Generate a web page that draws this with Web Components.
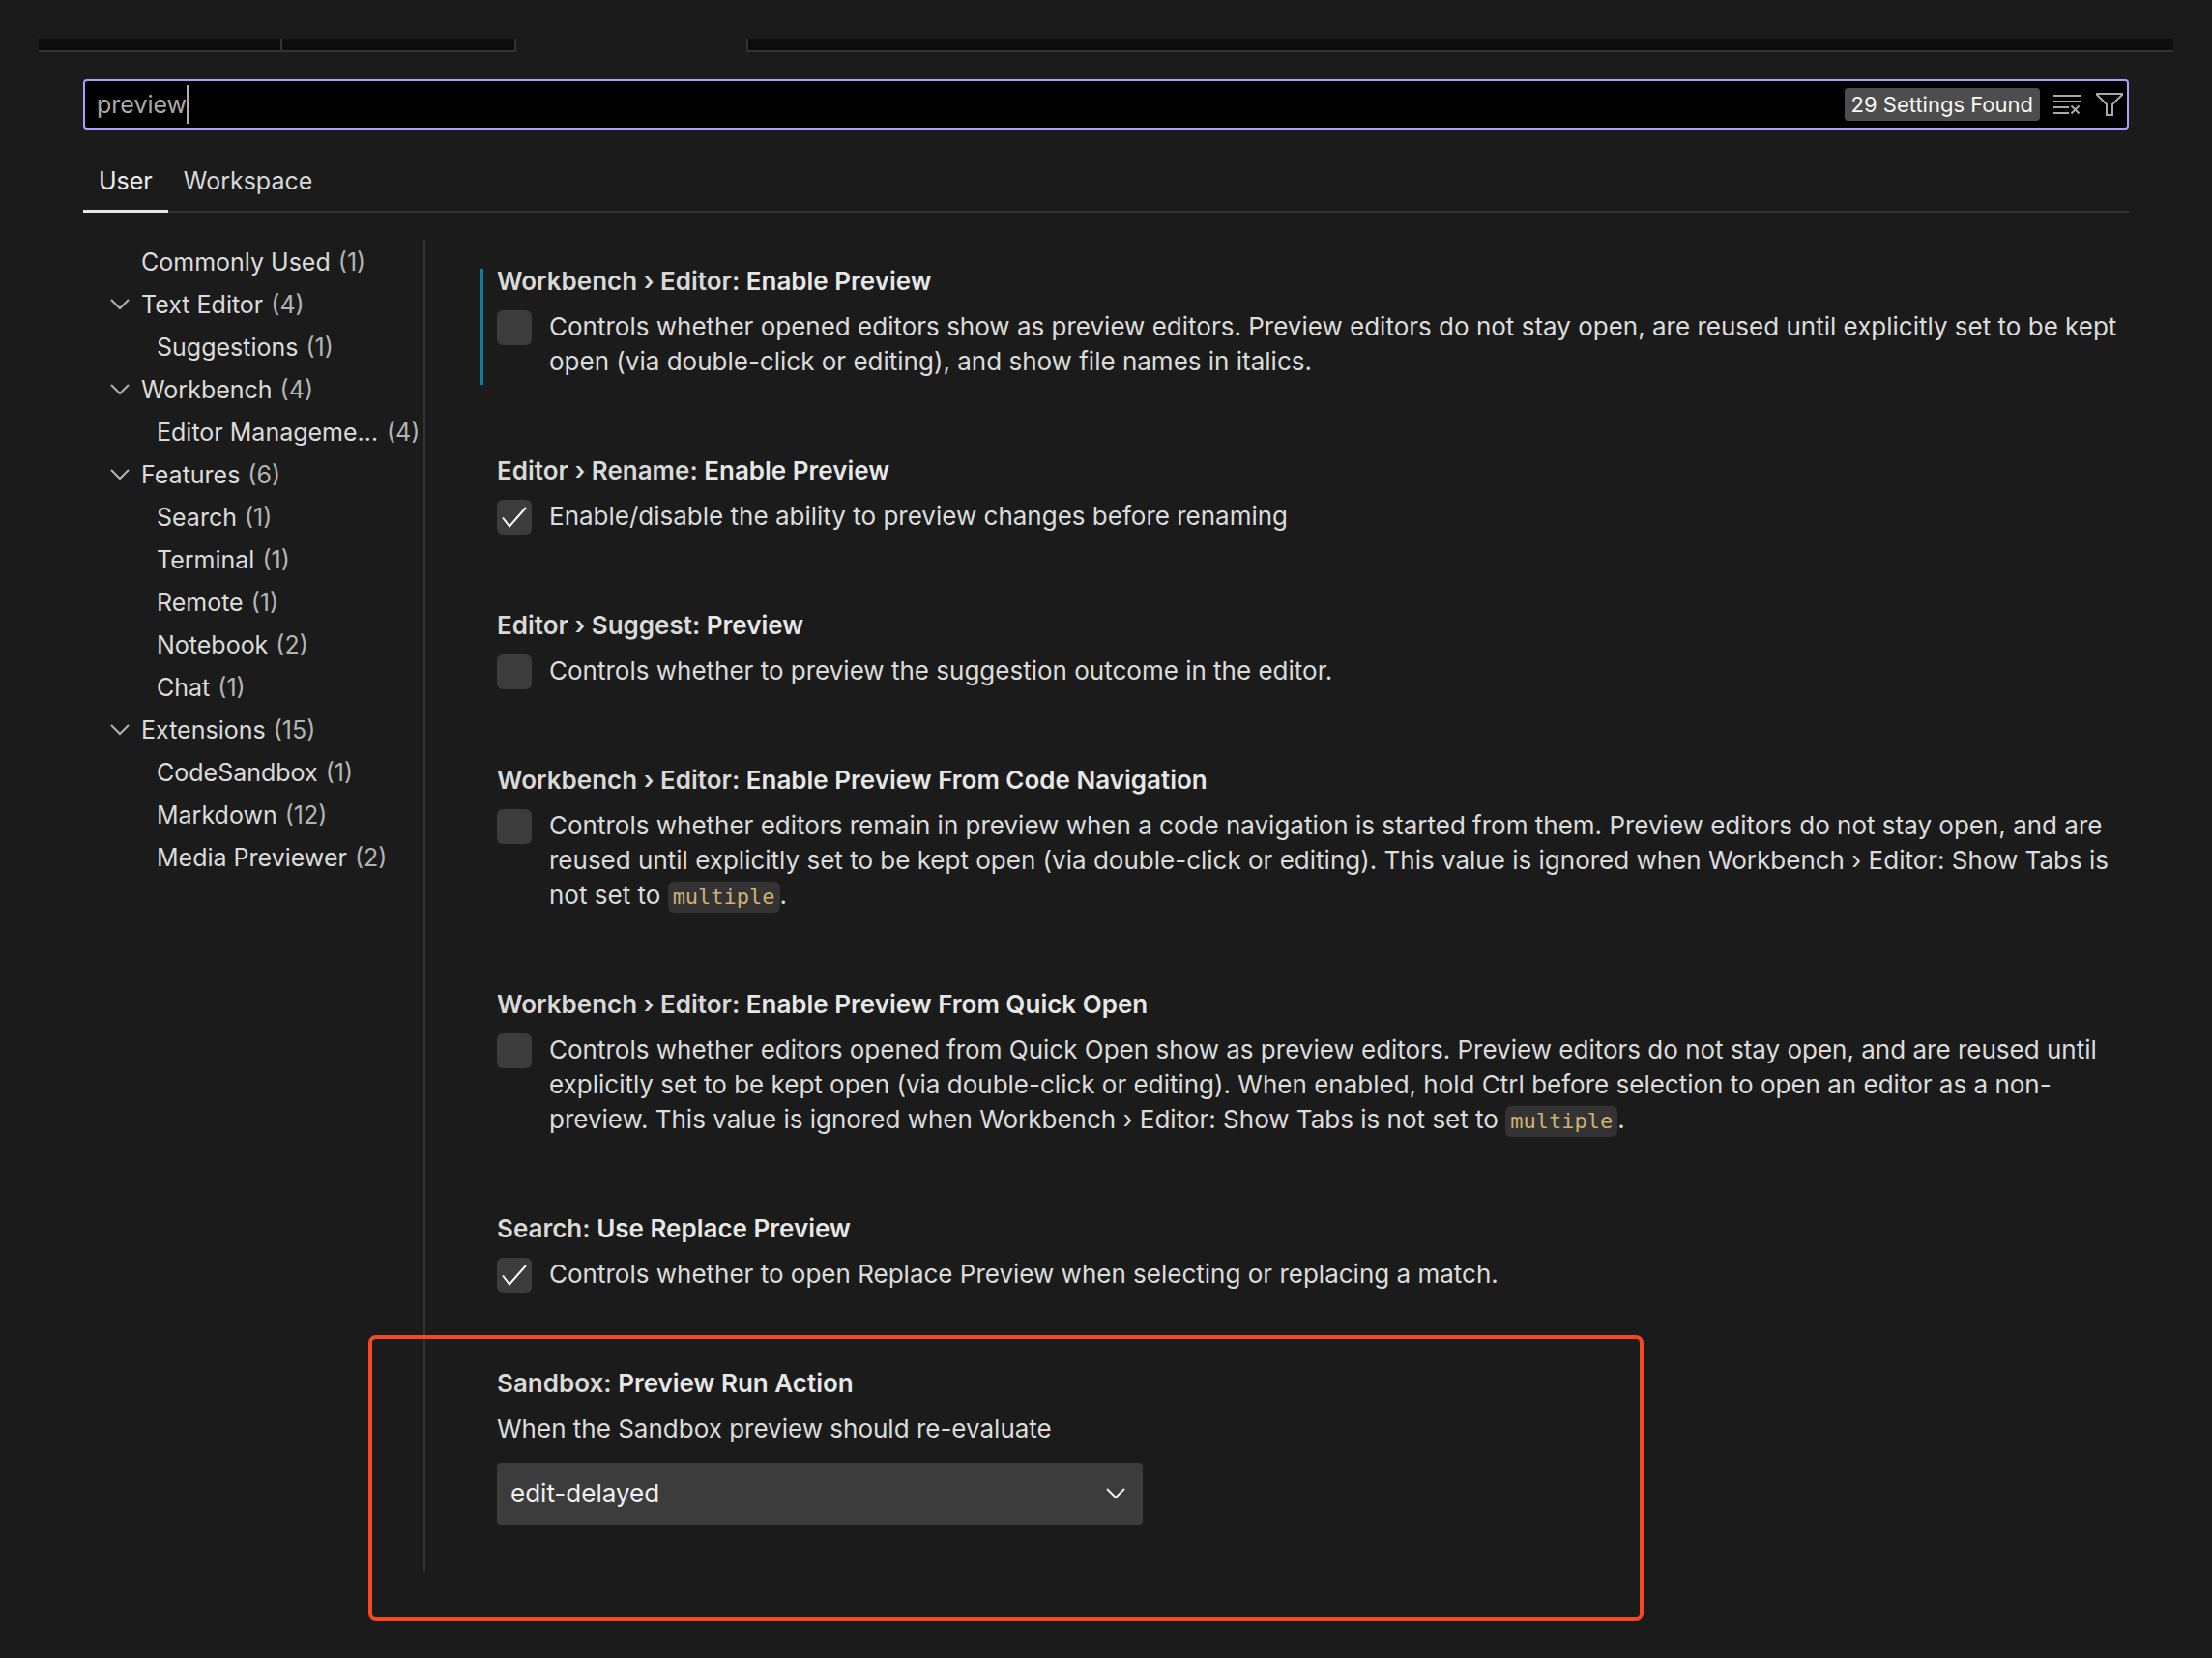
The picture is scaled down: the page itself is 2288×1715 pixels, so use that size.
<!DOCTYPE html>
<html lang="en">
<head>
<meta charset="utf-8">
<title>Settings</title>
<style>
  html { background: #1b1b1b; }
  body {
    box-sizing: border-box;
    min-height: 100vh;
    margin: 0;
    padding: 40px;
    font-family: Inter, "Liberation Sans", sans-serif;
    font-size: 26px;
    line-height: 36px;
    color: #dcdcdc;
  }
</style>
</head>
<body>
<settings-editor></settings-editor>

<script>
const define = (name, html, setup) => {
  const template = document.createElement('template');
  template.innerHTML = html;
  customElements.define(name, class extends HTMLElement {
    constructor() {
      super();
      this.attachShadow({ mode: 'open' }).append(template.content.cloneNode(true));
    }
    connectedCallback() { if (setup) setup(this, this.shadowRoot); }
  });
};

/* Cut-off editor tab strip */
define('editor-tabs', `
<style>
  :host { display: flex; height: 14px; }
  i { box-sizing: border-box; background: #0d0d0d; border-bottom: 2px solid #333; border-right: 2px solid #333; }
  .a { width: 252px; }
  .b { width: 242px; }
  .active { width: 238px; background: none; border: 0; }
  .rest { flex: 1; border-right: 0; border-left: 2px solid #333; }
</style>
<i class="a"></i><i class="b"></i><i class="active"></i><i class="rest"></i>`);

define('search-bar', `
<style>
  :host { display: flex; align-items: center; box-sizing: border-box; height: 52px; padding: 0 2px 0 12px;
    background: #000; border: 2px solid #ae9cff; border-radius: 4px; color: #a9a9a9; font-size: 25px; }
  input { field-sizing: content; font: inherit; color: inherit; background: none; border: 0; padding: 0; margin: 0; outline: 0; height: 40px; }
  .caret { width: 2px; height: 40px; background: #aeafad; }
  output { margin-left: auto; padding: 0 7px; border-radius: 4px; background: #4d4d4d; color: #f8f8f8; font-size: 22px; line-height: 34px; }
  button { display: block; border: 0; padding: 0; margin: 0 0 0 12px; background: none; color: #a9a9a9; width: 32px; height: 32px; }
  svg { display: block; width: 32px; height: 32px; fill: none; stroke: currentColor; stroke-width: 2; }
</style>
<input id="q" type="text" value="preview" aria-label="Search settings"><span class="caret"></span>
<output for="q">29 Settings Found</output>
<button aria-label="Clear settings search input"><svg viewBox="0 0 32 32"><path d="M2 7h28M2 13h28M2 19h16M2 25h16M20.500 17.500l8 8M28.500 17.500l-8 8"/></svg></button>
<button aria-label="Filter settings"><svg viewBox="0 0 32 32"><path d="M3 5h26v1L19 16v11h-6V16L3 6z"/></svg></button>`);

define('scope-tabs', `
<style>
  :host { display: flex; border-bottom: 2px solid #333; font-size: 25px; }
  a { color: #d8d8d8; text-decoration: none; padding: 35px 16px 12px; line-height: 36px; }
  a[aria-current] { color: #ededed; border-bottom: 3px solid #e7e7e7; margin-bottom: -2px; }
</style>
<a href="#user" aria-current="page">User</a><a href="#workspace">Workspace</a>`);

/* One row of the table of contents */
define('toc-row', `
<style>
  :host { display: flex; align-items: center; height: 44px; padding-left: 24px; font-size: 25px; }
  :host([level="2"]) { padding-left: 40px; }
  svg { flex: none; width: 20px; height: 12px; margin: 0 12px 0 4px; visibility: hidden; fill: none; stroke: #b4b4b4; stroke-width: 2; }
  :host([open]) svg { visibility: visible; }
  a { display: flex; gap: 8px; min-width: 0; color: #dcdcdc; text-decoration: none; }
  .name { max-width: 230px; overflow: hidden; text-overflow: ellipsis; white-space: nowrap; }
  .count { color: #b4b4b4; }
</style>
<svg viewBox="0 0 20 12"><path d="M1 1l9 9 9-9"/></svg>
<a href="#"><span class="name"><slot></slot></span><span class="count"></span></a>`,
(el, root) => { root.querySelector('.count').textContent = '(' + el.getAttribute('count') + ')'; });

define('toc-tree', `
<style>
  :host { display: block; box-sizing: border-box; width: 354px; flex: none; padding-top: 1px; border-right: 2px solid #333; }
</style>
<slot></slot>`);

define('setting-title', `
<style>
  :host { display: block; font-weight: 600; line-height: 26px; color: #e7e7e7; margin-bottom: 16px; }
  .cat { color: #d9d9d9; }
</style>
<span class="cat"><slot name="category"></slot></span> <slot></slot>`);

define('code-chip', `
<style>
  :host { display: inline-block; font-family: "DejaVu Sans Mono", "Liberation Mono", monospace; font-size: 22px; line-height: 26px;
    color: #cfb074; background: #333; border-radius: 6px; padding: 3px 5px; }
</style>
<slot></slot>`);

define('check-setting', `
<style>
  :host { display: block; padding: 0 0 6px 14px; border-left: 4px solid transparent; }
  :host([modified]) { border-left-color: #0f7c9b; }
  label { display: flex; gap: 18px; }
  .box { flex: none; display: grid; width: 36px; height: 36px; margin: 1px 0 -1px; }
  .box > * { grid-area: 1 / 1; }
  input { appearance: none; width: 36px; height: 36px; margin: 0; border-radius: 6px; background: #3c3c3c; }
  svg { width: 36px; height: 36px; fill: none; stroke: #fff; stroke-width: 2; visibility: hidden; z-index: 1; }
  input:checked + svg { visibility: visible; }
</style>
<setting-title><span slot="category"></span><slot name="title"></slot></setting-title>
<label><span class="box"><input type="checkbox"><svg viewBox="0 0 36 36"><path d="M6 18.500l7 9L30 8"/></svg></span>
<span><slot></slot></span></label>`,
(el, root) => {
  root.querySelector('[slot="category"]').textContent = el.getAttribute('category') + ':';
  root.querySelector('input').checked = el.hasAttribute('checked');
});

define('select-setting', `
<style>
  :host { display: block; position: relative; padding: 0 0 49px 18px; }
  label { display: block; margin-bottom: 17px; }
  .field { display: grid; max-width: 668px; }
  .field > * { grid-area: 1 / 1; }
  select { appearance: none; font: inherit; color: #f0f0f0; background: #3c3c3c; border: 0; border-radius: 4px; height: 64px; padding: 0 14px; margin: 0; }
  svg { justify-self: end; align-self: center; width: 20px; height: 12px; margin-right: 18px; fill: none; stroke: #f0f0f0; stroke-width: 2; pointer-events: none; z-index: 1; }
  /* red call-out drawn over the row */
  .mark { position: absolute; box-sizing: border-box; left: -115px; top: -37px; width: 1319px; height: 296px; border: 4px solid #f94722; border-radius: 8px; pointer-events: none; }
</style>
<setting-title><span slot="category">Sandbox:</span>Preview Run Action</setting-title>
<label for="run">When the Sandbox preview should re-evaluate</label>
<div class="field">
  <select id="run"><option>edit-delayed</option></select>
  <svg viewBox="0 0 20 12"><path d="M1 1l9 9 9-9"/></svg>
</div>
<div class="mark"></div>`);

define('settings-list', `
<style>
  :host { display: flex; flex-direction: column; gap: 76px; flex: 1; min-width: 0; padding: 30px 0 0 56px; }
</style>
<slot></slot>`);

define('settings-editor', `
<style>
  :host { display: block; }
  main { padding: 28px 46px 0; }
  .body { display: flex; padding-top: 28px; }
</style>
<editor-tabs></editor-tabs>
<main>
  <search-bar></search-bar>
  <scope-tabs></scope-tabs>
  <div class="body">
    <toc-tree>
      <toc-row count="1">Commonly Used</toc-row>
      <toc-row open count="4">Text Editor</toc-row>
      <toc-row level="2" count="1">Suggestions</toc-row>
      <toc-row open count="4">Workbench</toc-row>
      <toc-row level="2" count="4">Editor Management</toc-row>
      <toc-row open count="6">Features</toc-row>
      <toc-row level="2" count="1">Search</toc-row>
      <toc-row level="2" count="1">Terminal</toc-row>
      <toc-row level="2" count="1">Remote</toc-row>
      <toc-row level="2" count="2">Notebook</toc-row>
      <toc-row level="2" count="1">Chat</toc-row>
      <toc-row open count="15">Extensions</toc-row>
      <toc-row level="2" count="1">CodeSandbox</toc-row>
      <toc-row level="2" count="12">Markdown</toc-row>
      <toc-row level="2" count="2">Media Previewer</toc-row>
    </toc-tree>
    <settings-list>
      <check-setting modified category="Workbench › Editor"><span slot="title">Enable Preview</span>Controls whether opened editors show as preview editors. Preview editors do not stay open, are reused until explicitly set to be kept open (via double-click or editing), and show file names in italics.</check-setting>
      <check-setting checked category="Editor › Rename"><span slot="title">Enable Preview</span>Enable/disable the ability to preview changes before renaming</check-setting>
      <check-setting category="Editor › Suggest"><span slot="title">Preview</span>Controls whether to preview the suggestion outcome in the editor.</check-setting>
      <check-setting category="Workbench › Editor"><span slot="title">Enable Preview From Code Navigation</span>Controls whether editors remain in preview when a code navigation is started from them. Preview editors do not stay open, and are reused until explicitly set to be kept open (via double-click or editing). This value is ignored when Workbench › Editor: Show Tabs is not set to <code-chip>multiple</code-chip>.</check-setting>
      <check-setting category="Workbench › Editor"><span slot="title">Enable Preview From Quick Open</span>Controls whether editors opened from Quick Open show as preview editors. Preview editors do not stay open, and are reused until explicitly set to be kept open (via double-click or editing). When enabled, hold Ctrl before selection to open an editor as a non-preview. This value is ignored when Workbench › Editor: Show Tabs is not set to <code-chip>multiple</code-chip>.</check-setting>
      <check-setting checked category="Search"><span slot="title">Use Replace Preview</span>Controls whether to open Replace Preview when selecting or replacing a match.</check-setting>
      <select-setting></select-setting>
    </settings-list>
  </div>
</main>`);
</script>
</body>
</html>
